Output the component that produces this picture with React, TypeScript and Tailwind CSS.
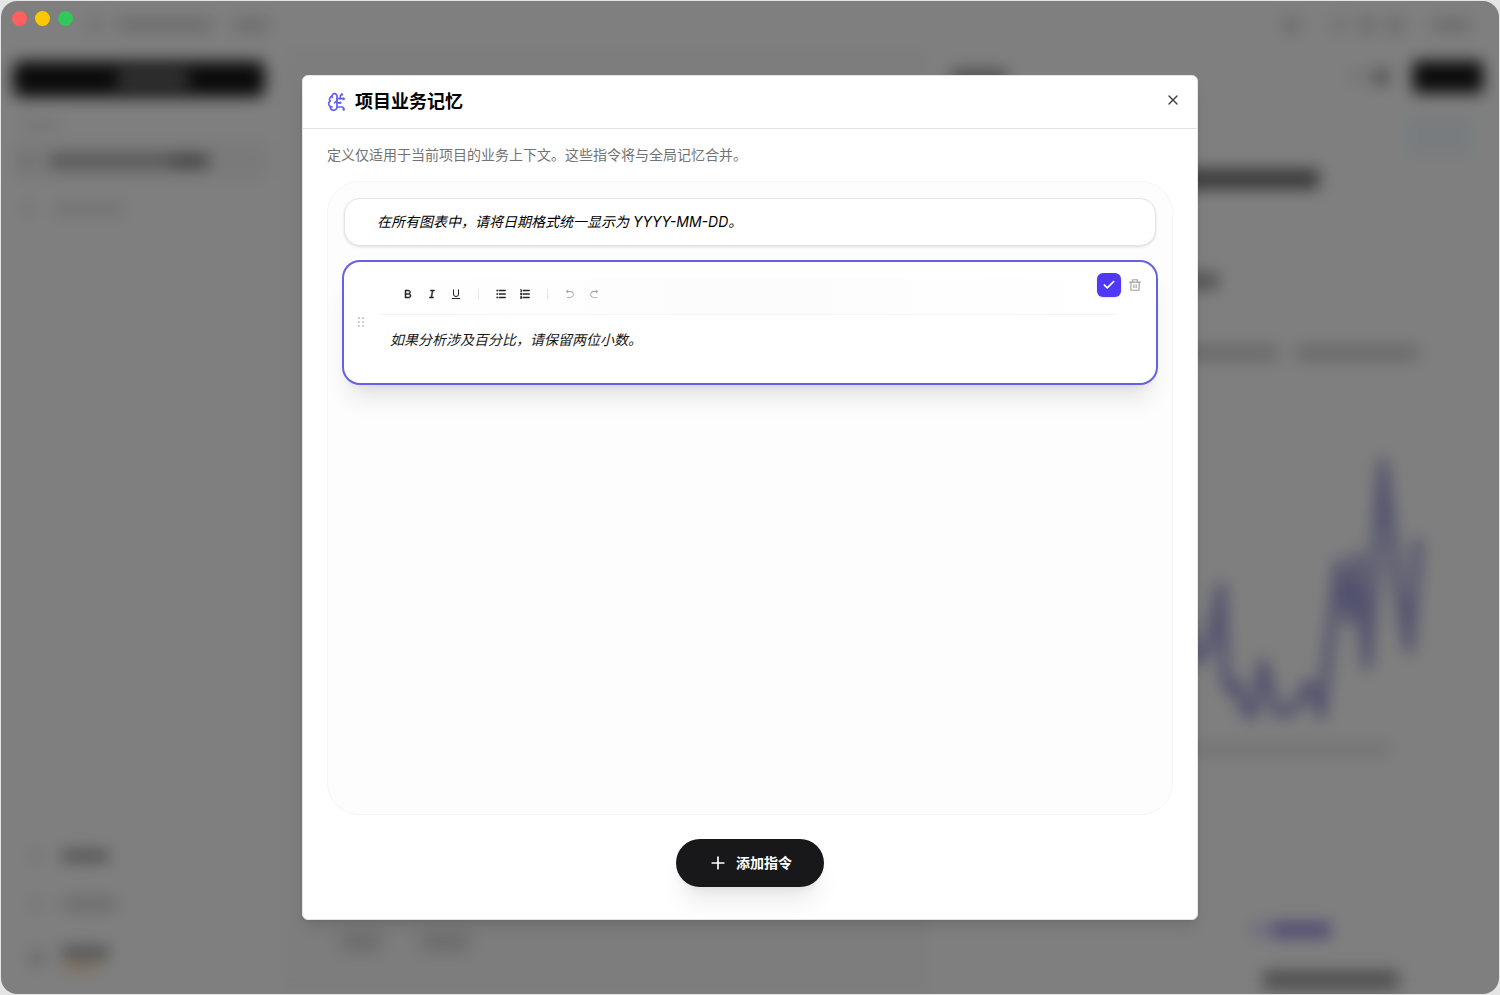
import { useState } from "react";
import type { ReactNode } from "react";
import { BrainCircuit, Check, Plus, X } from "lucide-react";
import {
  RiArrowGoBackLine,
  RiArrowGoForwardLine,
  RiBold,
  RiDeleteBinLine,
  RiDraggable,
  RiItalic,
  RiListOrdered,
  RiListUnordered,
  RiUnderline,
} from "react-icons/ri";

function Block({ className }: { className: string }) {
  return <span className={`block shrink-0 rounded ${className}`} />;
}

function TitleBar() {
  return (
    <div className="flex h-12 items-center justify-between pr-7 pl-20">
      <div className="flex items-center gap-3 pl-1">
        <Block className="h-3 w-5 bg-neutral-200" />
        <Block className="h-3 w-24 bg-neutral-300" />
        <Block className="ml-2 h-3 w-9 bg-neutral-300" />
      </div>
      <div className="flex items-center gap-3">
        <Block className="mr-5 size-4 bg-neutral-300" />
        <Block className="size-4 bg-neutral-200" />
        <Block className="size-4 bg-neutral-300" />
        <Block className="size-4 bg-neutral-300" />
        <Block className="ml-4 h-3 w-10 bg-neutral-300" />
      </div>
    </div>
  );
}

function Sidebar() {
  return (
    <div className="flex w-[284px] shrink-0 flex-col px-3 pt-3 pb-6">
      <div className="flex h-9 w-[252px] items-center justify-center rounded-lg bg-neutral-900">
        <Block className="ml-7 h-4 w-18 bg-neutral-500" />
      </div>
      <Block className="mt-6 ml-2 h-2 w-10 bg-neutral-200" />
      <div className="mt-3 flex h-10 w-[256px] items-center gap-4 rounded-lg bg-neutral-100 px-2">
        <Block className="size-3 bg-neutral-300" />
        <div className="flex">
          <Block className="h-3 w-30 bg-neutral-400" />
          <Block className="h-3 w-10 bg-neutral-500" />
        </div>
      </div>
      <div className="mt-2 flex h-10 items-center gap-5 px-2">
        <Block className="size-3 bg-neutral-200" />
        <Block className="h-3 w-18 bg-neutral-200" />
      </div>
      <div className="mt-auto flex flex-col gap-9 pl-4">
        <div className="flex items-center gap-5">
          <Block className="size-3 bg-neutral-200" />
          <Block className="h-3 w-12 bg-neutral-400" />
        </div>
        <div className="flex items-center gap-5">
          <Block className="size-3 bg-neutral-200" />
          <Block className="h-3 w-14 bg-neutral-300" />
        </div>
        <div className="flex items-center gap-4">
          <Block className="size-4 bg-neutral-300" />
          <div className="flex flex-col gap-1">
            <Block className="h-3 w-12 bg-neutral-400" />
            <Block className="h-2 w-10 bg-orange-200" />
          </div>
        </div>
      </div>
    </div>
  );
}

function ChatPane() {
  return (
    <div className="flex min-w-0 flex-1 flex-col justify-end bg-neutral-50 px-14 pb-11">
      <div className="flex gap-10">
        <Block className="h-4 w-10 bg-neutral-300" />
        <Block className="h-4 w-12 bg-neutral-300" />
      </div>
    </div>
  );
}

function ReportPane() {
  return (
    <div className="flex w-[572px] shrink-0 flex-col">
      <div className="flex h-14 items-center gap-6 pr-4 pl-6">
        <Block className="h-4 w-14 bg-neutral-400" />
        <Block className="ml-auto h-3 w-4 bg-neutral-200" />
        <Block className="-ml-4 size-4 bg-neutral-400" />
        <Block className="h-8 w-[70px] bg-neutral-900" />
      </div>
      <div className="flex h-13 items-end justify-end pr-7">
        <Block className="h-10 w-16 bg-sky-50" />
      </div>
      <div className="flex h-12 justify-end pr-45">
        <Block className="mt-3 h-5 w-80 bg-neutral-500" />
      </div>
      <div className="flex h-25 items-end pl-12">
        <Block className="mb-4 h-4 w-61 bg-neutral-400" />
      </div>
      <div className="flex h-18 items-end pl-12">
        <Block className="mb-4 h-4 w-76 bg-neutral-300" />
        <Block className="mb-4 ml-4 h-4 w-31 bg-neutral-300" />
      </div>
      <svg className="mt-11 ml-30 h-[314px] w-[400px] shrink-0" viewBox="0 0 400 314" fill="none" aria-hidden="true">
        <path
          d="M20 250 L60 190 L90 270 L125 160 L150 240 L162 226 L174 166 L178 256 L184 270 L190 262 L198 290 L206 294 L216 242 L230 292 L246 290 L262 262 L274 294 L292 142 L302 200 L310 134 L320 244 L336 42 L350 160 L362 228 L371 122"
          stroke="#a3a1da"
          strokeWidth="10"
          strokeLinejoin="round"
          strokeLinecap="round"
        />
      </svg>
      <Block className="mt-2 ml-30 h-3 w-86 bg-neutral-200" />
      <div className="mt-auto flex flex-col gap-8 pb-1 pl-80">
        <div className="ml-1 flex gap-1">
          <Block className="h-4 w-4 bg-violet-200" />
          <Block className="h-4 w-15 bg-[#a094e6]" />
        </div>
        <Block className="ml-4 h-5 w-34 bg-neutral-400" />
      </div>
    </div>
  );
}

function Workspace() {
  return (
    <div aria-hidden="true" className="flex h-full flex-col bg-white blur-[8px]">
      <TitleBar />
      <div className="flex min-h-0 flex-1">
        <Sidebar />
        <ChatPane />
        <ReportPane />
      </div>
    </div>
  );
}

function ToolButton({ label, disabled, children }: { label: string; disabled?: boolean; children: ReactNode }) {
  return (
    <button
      type="button"
      aria-label={label}
      disabled={disabled}
      className="flex size-6 items-center justify-center rounded text-neutral-800 disabled:text-neutral-400"
    >
      {children}
    </button>
  );
}

function Separator() {
  return <span className="mx-2.5 h-2.5 w-px bg-neutral-200" />;
}

function MemoryEditor() {
  const [text, setText] = useState("如果分析涉及百分比，请保留两位小数。");
  return (
    <li className="relative flex items-center rounded-2xl bg-white pr-10 pl-2.5 shadow-xl ring-2 ring-[#6660e8]">
      <button type="button" aria-label="拖动排序" className="shrink-0 cursor-grab text-neutral-400">
        <RiDraggable className="size-3.5" />
      </button>
      <div className="ml-3 min-w-0 flex-1 pt-4 pb-8">
        <div className="flex h-[37px] items-center border-b border-neutral-100 bg-linear-to-r from-white via-[#fcfcfc] to-white pb-1 pl-4">
          <ToolButton label="粗体"><RiBold className="size-3 stroke-current stroke-1" /></ToolButton>
          <ToolButton label="斜体"><RiItalic className="size-3 stroke-current stroke-1" /></ToolButton>
          <ToolButton label="下划线"><RiUnderline className="size-3" /></ToolButton>
          <Separator />
          <ToolButton label="无序列表"><RiListUnordered className="size-3 stroke-current stroke-1" /></ToolButton>
          <ToolButton label="有序列表"><RiListOrdered className="size-3 stroke-current stroke-1" /></ToolButton>
          <Separator />
          <ToolButton label="撤销" disabled><RiArrowGoBackLine className="size-2.5" /></ToolButton>
          <ToolButton label="重做" disabled><RiArrowGoForwardLine className="size-2.5" /></ToolButton>
        </div>
        <input
          aria-label="指令内容"
          value={text}
          onChange={(event) => setText(event.target.value)}
          className="mt-3 block h-6 w-full bg-transparent px-2.5 text-sm text-neutral-900 italic outline-none"
        />
      </div>
      <div className="absolute top-[11px] right-[9px] flex gap-0.5">
        <button type="button" aria-label="保存" className="flex size-6 items-center justify-center rounded-md bg-[#4f39f6] text-white shadow-sm">
          <Check className="size-3.5" strokeWidth={3} />
        </button>
        <button type="button" aria-label="删除" className="flex size-6 items-center justify-center text-neutral-400">
          <RiDeleteBinLine className="size-3.5" />
        </button>
      </div>
    </li>
  );
}

function MemoryDialog() {
  return (
    <section
      role="dialog"
      aria-modal="true"
      aria-labelledby="memory-title"
      className="flex h-[85vh] w-full max-w-4xl flex-col overflow-hidden rounded-md border border-neutral-200 bg-white shadow-lg"
    >
      <header className="flex h-[53px] shrink-0 items-center justify-between border-b border-neutral-200 pr-4 pl-6">
        <div className="flex items-center gap-2">
          <BrainCircuit className="size-5 text-[#6660f0]" />
          <h1 id="memory-title" className="text-lg font-bold text-black">项目业务记忆</h1>
        </div>
        <button type="button" aria-label="关闭" className="mt-4 flex size-4 items-center justify-center self-start text-neutral-700">
          <X className="size-4" />
        </button>
      </header>
      <div className="flex min-h-0 flex-1 flex-col px-6 pt-4 pb-8">
        <p className="text-sm text-neutral-500">定义仅适用于当前项目的业务上下文。这些指令将与全局记忆合并。</p>
        <ul className="mt-4 flex flex-1 flex-col gap-4 rounded-4xl border border-neutral-100 bg-[#fdfdfd] p-4">
          <li className="flex h-12 items-center rounded-2xl border border-neutral-200 bg-white px-8 text-sm text-black italic shadow-sm">
            在所有图表中，请将日期格式统一显示为 YYYY-MM-DD。
          </li>
          <MemoryEditor />
        </ul>
        <button
          type="button"
          className="mt-6 flex h-12 shrink-0 items-center gap-2 self-center rounded-full bg-[#18181b] px-8 text-sm font-bold text-white shadow-xl shadow-black/8"
        >
          <Plus className="size-5" />
          添加指令
        </button>
      </div>
    </section>
  );
}

export default function App() {
  return (
    <main className="h-screen bg-neutral-200 p-px font-['Inter','Noto_Sans_CJK_SC',sans-serif]" lang="zh-CN">
      <div className="relative h-full overflow-hidden rounded-2xl bg-white">
        <Workspace />
        <div className="absolute inset-0 flex items-center justify-center bg-black/50">
          <MemoryDialog />
        </div>
        <div className="absolute top-2.5 left-[11px] flex gap-2" aria-hidden="true">
          <span className="size-[15px] rounded-full bg-[#ff5f5f]" />
          <span className="size-[15px] rounded-full bg-[#fcc800]" />
          <span className="size-[15px] rounded-full bg-[#34c759]" />
        </div>
      </div>
    </main>
  );
}
